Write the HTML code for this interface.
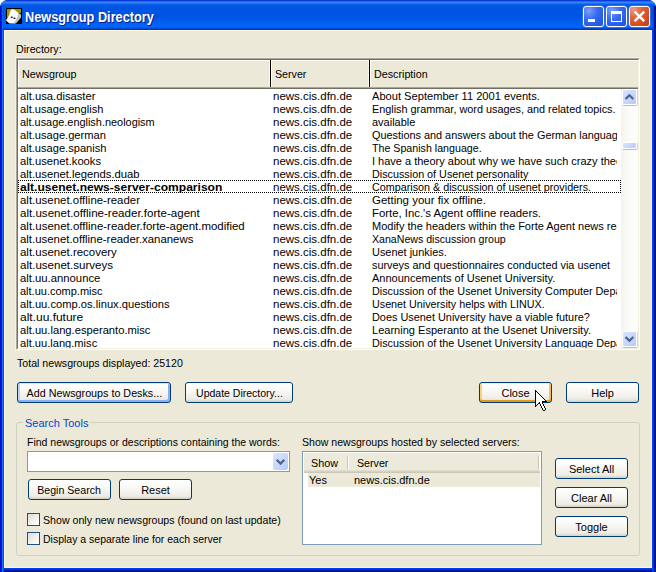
<!DOCTYPE html>
<html><head><meta charset="utf-8">
<style>
*{box-sizing:border-box;margin:0;padding:0}
html,body{width:656px;height:572px;overflow:hidden;background:#fff}
body{position:relative;font-family:"Liberation Sans",sans-serif;font-size:11px;color:#000}
.a{position:absolute}
.t{position:absolute;white-space:nowrap;line-height:13px;height:13px}
#win{left:0;top:0;width:656px;height:572px;border-radius:8px 8px 0 0;overflow:hidden;background:#0040f0}
#title{left:0;top:0;width:656px;height:30px;
background:linear-gradient(180deg,#0831d9 0px,#0a43dc 1px,#3a8cfc 2px,#2f7ef8 3px,#0f62ea 4px,#0558e6 5px,#0054e3 8px,#0054e3 16px,#0058e8 19px,#005ef0 22px,#0064f8 25px,#0066fc 27px,#0054e8 28px,#003bc0 29px,#0036b8 30px)}
#lb{left:0;top:6px;width:4px;height:566px;background:linear-gradient(90deg,#0010cc 0 1px,#0020d4 1px 2px,rgba(26,112,245,.5) 2px 3px,rgba(0,80,224,.3) 3px 4px)}
#rb{left:652px;top:6px;width:4px;height:566px;background:linear-gradient(90deg,rgba(0,64,245,.4) 0 1px,rgba(0,53,224,.6) 1px 2px,#001890 2px 3px,#00158a 3px 4px)}
#bb{left:0;top:568px;width:656px;height:4px;background:linear-gradient(180deg,#0040f0 0 1px,#0035e0 1px 2px,#001a98 2px 3px,#00138a 3px 4px)}
#client{left:4px;top:30px;width:648px;height:538px;background:#ece9d8;border:1px solid #fff6da}
.ttl{left:25px;top:9px;font-weight:bold;font-size:14px;line-height:17px;transform:scaleX(0.91);transform-origin:0 0;color:#fff;text-shadow:1px 1px 0 #0a1a80;white-space:nowrap}
.cb{top:6px;width:21px;height:21px;border:1px solid #fff;border-radius:3px;box-shadow:0 0 0 0.5px rgba(255,255,255,.3)}
.min,.max{background:radial-gradient(circle at 25% 20%,#7aa2f8 0,#3a6cf0 40%,#2a5ce8 70%,#1e50e0 100%)}
.cls{background:radial-gradient(circle at 20% 15%,#ee9a80 0,#e2643a 35%,#d9501f 65%,#c23a12 100%)}
.btn{position:absolute;height:21px;border:1px solid #003c74;border-radius:3px;
background:linear-gradient(180deg,#ffffff 0,#fdfdfb 20%,#f4f3ee 60%,#ecebe5 85%,#dcd8cc 95%,#d6d0c5 100%);
text-align:center;line-height:20px;white-space:nowrap}
.def{box-shadow:inset 0 1px 0 #cee7ff,inset -2px -2px 0 #8caef2,inset 2px 0 0 #bcd3f8}
.hov{box-shadow:inset 0 1px 0 #ffe9b5,inset 0 -2px 0 #e59a18,inset 2px 0 0 #fbd27a,inset -2px 0 0 #f6bf4e}
.row{position:absolute;left:18px;width:603px;height:13px}
.c1,.c2,.c3{position:absolute;top:1px;line-height:13px;white-space:nowrap;height:13px;transform-origin:0 0}
.chk{position:absolute;width:13px;height:13px;border:1px solid #1c5180;background:linear-gradient(135deg,#dcdcd7 0,#f0f0ec 50%,#fff 100%)}
.sbf{position:absolute;left:622px;width:15px;border:1px solid #fff;border-radius:2px;background:linear-gradient(135deg,#d8e4fe 0,#c8d8fd 50%,#b6cbfb 100%)}
.sbs{position:absolute;left:623px;width:14px;height:1px;background:#a7bff2}
.sbr{position:absolute;left:637px;width:1px;background:#c6d6f6}
.px{position:absolute}
</style></head>
<body>
<div id="win" class="a">
  <div id="title" class="a"></div>
  <div id="lb" class="a"></div>
  <div id="rb" class="a"></div>
  <div id="bb" class="a"></div>
  <div class="a" style="left:0;top:30px;width:4px;height:542px;background:linear-gradient(90deg,#0010cc 0 1px,#0018d0 1px 2px,#1a70f5 2px 3px,#0050e0 3px 4px)"></div>
  <div class="a" style="left:652px;top:30px;width:4px;height:542px;background:linear-gradient(90deg,#0040f5 0 1px,#0035e0 1px 2px,#001890 2px 3px,#00158a 3px 4px)"></div>
  <div id="client" class="a"></div>
</div>
<svg class="a" style="left:6px;top:8px" width="16" height="16" viewBox="0 0 16 16">
<rect width="16" height="16" fill="#000"/>
<polygon points="1,1 15,1 15,5 12,5 10,3 5,3 4,5 3,9 1,10" fill="#9a9a00"/>
<polygon points="6,1 9,2 12,4.5 13,6 11.5,11 9,15.5 3.5,15.5 0,12.5 3,7.5 4,3.5" fill="#fff"/>
<polygon points="12,4.5 15,6.5 15,9.5 13,12 10,15.5 7.5,15.5 10,12 11.8,8" fill="#c0c0c0"/>
<ellipse cx="5.8" cy="9.2" rx="1.1" ry="0.8" fill="#000"/>
<ellipse cx="8.5" cy="10.3" rx="1.1" ry="0.8" fill="#000"/>
</svg>
<div class="a ttl">Newsgroup Directory</div>
<div class="a cb min" style="left:583px"><div class="a" style="left:4px;top:12px;width:7px;height:3px;background:#fff"></div></div>
<div class="a cb max" style="left:606px"><div class="a" style="left:4px;top:4px;width:11px;height:11px;border:1px solid #fff;border-top-width:3px"></div></div>
<div class="a cb cls" style="left:629px"><svg class="a" style="left:0;top:0" width="19" height="19"><path d="M4.6,4.6 L14.2,14.2 M14.2,4.6 L4.6,14.2" stroke="#fff" stroke-width="2.4"/></svg></div>
<div class="t" style="left:16px;top:43px;transform:scaleX(0.97);transform-origin:0 0">Directory:</div>
<div class="px" style="left:15px;top:57px;width:626px;height:1px;background:#f3f1e6"></div>
<div class="px" style="left:15px;top:57px;width:1px;height:294px;background:#f3f1e6"></div>
<div class="a" style="left:16px;top:58px;width:624px;height:292px;background:#fff;border-top:1px solid #aca899;border-left:1px solid #aca899;border-bottom:1px solid #fff;border-right:1px solid #fff"></div>
<div class="a" style="left:17px;top:59px;width:622px;height:290px;border-top:1px solid #716f64;border-left:1px solid #716f64;border-bottom:1px solid #f1efe2;border-right:1px solid #f1efe2"></div>
<div class="px" style="left:18px;top:60px;width:620px;height:29px;background:#ece9d8"></div>
<div class="px" style="left:18px;top:60px;width:620px;height:1px;background:#fff"></div>
<div class="px" style="left:18px;top:87px;width:620px;height:1px;background:#aca899"></div>
<div class="px" style="left:18px;top:88px;width:620px;height:1px;background:#716f64"></div>
<div class="px" style="left:18px;top:60px;width:1px;height:27px;background:#fff"></div>
<div class="px" style="left:269px;top:61px;width:1px;height:26px;background:#fbf8e6"></div>
<div class="px" style="left:270px;top:60px;width:1px;height:27px;background:#000"></div>
<div class="px" style="left:271px;top:60px;width:1px;height:27px;background:#fff"></div>
<div class="px" style="left:368px;top:61px;width:1px;height:26px;background:#fbf8e6"></div>
<div class="px" style="left:369px;top:60px;width:1px;height:27px;background:#000"></div>
<div class="px" style="left:370px;top:60px;width:1px;height:27px;background:#fff"></div>
<div class="t" style="left:22px;top:68px;transform:scaleX(0.98);transform-origin:0 0">Newsgroup</div>
<div class="t" style="left:275px;top:68px;transform:scaleX(0.97);transform-origin:0 0">Server</div>
<div class="t" style="left:374px;top:68px;transform:scaleX(0.975);transform-origin:0 0">Description</div>
<div class="a" style="left:0;top:89px;width:656px;height:259px;overflow:hidden">
<div class="row" style="top:0px"><div class="c1" style="left:2px;transform:scaleX(1.02)">alt.usa.disaster</div><div class="c2" style="left:255px;transform:scaleX(1.045)">news.cis.dfn.de</div><div class="a" style="left:354px;top:0;width:245px;height:13px;overflow:hidden"><div class="c3" style="left:0;transform:scaleX(1.01)">About September 11 2001 events.</div></div></div>
<div class="row" style="top:13px"><div class="c1" style="left:2px;transform:scaleX(1.01)">alt.usage.english</div><div class="c2" style="left:255px;transform:scaleX(1.045)">news.cis.dfn.de</div><div class="a" style="left:354px;top:0;width:245px;height:13px;overflow:hidden"><div class="c3" style="left:0;transform:scaleX(0.986)">English grammar, word usages, and related topics.</div></div></div>
<div class="row" style="top:26px"><div class="c1" style="left:2px;transform:scaleX(0.992)">alt.usage.english.neologism</div><div class="c2" style="left:255px;transform:scaleX(1.045)">news.cis.dfn.de</div><div class="a" style="left:354px;top:0;width:245px;height:13px;overflow:hidden"><div class="c3" style="left:0;transform:scaleX(1.0)">available</div></div></div>
<div class="row" style="top:39px"><div class="c1" style="left:2px;transform:scaleX(1.01)">alt.usage.german</div><div class="c2" style="left:255px;transform:scaleX(1.045)">news.cis.dfn.de</div><div class="a" style="left:354px;top:0;width:245px;height:13px;overflow:hidden"><div class="c3" style="left:0;transform:scaleX(0.988)">Questions and answers about the German language.</div></div></div>
<div class="row" style="top:52px"><div class="c1" style="left:2px;transform:scaleX(1.01)">alt.usage.spanish</div><div class="c2" style="left:255px;transform:scaleX(1.045)">news.cis.dfn.de</div><div class="a" style="left:354px;top:0;width:245px;height:13px;overflow:hidden"><div class="c3" style="left:0;transform:scaleX(0.969)">The Spanish language.</div></div></div>
<div class="row" style="top:65px"><div class="c1" style="left:2px;transform:scaleX(1.02)">alt.usenet.kooks</div><div class="c2" style="left:255px;transform:scaleX(1.045)">news.cis.dfn.de</div><div class="a" style="left:354px;top:0;width:245px;height:13px;overflow:hidden"><div class="c3" style="left:0;transform:scaleX(1.0)">I have a theory about why we have such crazy theories.</div></div></div>
<div class="row" style="top:78px"><div class="c1" style="left:2px;transform:scaleX(1.024)">alt.usenet.legends.duab</div><div class="c2" style="left:255px;transform:scaleX(1.045)">news.cis.dfn.de</div><div class="a" style="left:354px;top:0;width:245px;height:13px;overflow:hidden"><div class="c3" style="left:0;transform:scaleX(0.98)">Discussion of Usenet personality</div></div></div>
<div class="row" style="top:91px"><div class="c1" style="left:2px;font-weight:bold;transform:scaleX(1.096)">alt.usenet.news-server-comparison</div><div class="c2" style="left:255px;transform:scaleX(1.045)">news.cis.dfn.de</div><div class="a" style="left:354px;top:0;width:245px;height:13px;overflow:hidden"><div class="c3" style="left:0;transform:scaleX(0.979)">Comparison &amp; discussion of usenet providers.</div></div></div>
<div class="row" style="top:104px"><div class="c1" style="left:2px;transform:scaleX(1.04)">alt.usenet.offline-reader</div><div class="c2" style="left:255px;transform:scaleX(1.045)">news.cis.dfn.de</div><div class="a" style="left:354px;top:0;width:245px;height:13px;overflow:hidden"><div class="c3" style="left:0;transform:scaleX(1.043)">Getting your fix offline.</div></div></div>
<div class="row" style="top:117px"><div class="c1" style="left:2px;transform:scaleX(1.051)">alt.usenet.offline-reader.forte-agent</div><div class="c2" style="left:255px;transform:scaleX(1.045)">news.cis.dfn.de</div><div class="a" style="left:354px;top:0;width:245px;height:13px;overflow:hidden"><div class="c3" style="left:0;transform:scaleX(1.031)">Forte, Inc.'s Agent offline readers.</div></div></div>
<div class="row" style="top:130px"><div class="c1" style="left:2px;transform:scaleX(1.042)">alt.usenet.offline-reader.forte-agent.modified</div><div class="c2" style="left:255px;transform:scaleX(1.045)">news.cis.dfn.de</div><div class="a" style="left:354px;top:0;width:245px;height:13px;overflow:hidden"><div class="c3" style="left:0;transform:scaleX(1.0)">Modify the headers within the Forte Agent news reader.</div></div></div>
<div class="row" style="top:143px"><div class="c1" style="left:2px;transform:scaleX(1.036)">alt.usenet.offline-reader.xananews</div><div class="c2" style="left:255px;transform:scaleX(1.045)">news.cis.dfn.de</div><div class="a" style="left:354px;top:0;width:245px;height:13px;overflow:hidden"><div class="c3" style="left:0;transform:scaleX(0.963)">XanaNews discussion group</div></div></div>
<div class="row" style="top:156px"><div class="c1" style="left:2px;transform:scaleX(1.042)">alt.usenet.recovery</div><div class="c2" style="left:255px;transform:scaleX(1.045)">news.cis.dfn.de</div><div class="a" style="left:354px;top:0;width:245px;height:13px;overflow:hidden"><div class="c3" style="left:0;transform:scaleX(0.994)">Usenet junkies.</div></div></div>
<div class="row" style="top:169px"><div class="c1" style="left:2px;transform:scaleX(1.049)">alt.usenet.surveys</div><div class="c2" style="left:255px;transform:scaleX(1.045)">news.cis.dfn.de</div><div class="a" style="left:354px;top:0;width:245px;height:13px;overflow:hidden"><div class="c3" style="left:0;transform:scaleX(0.988)">surveys and questionnaires conducted via usenet</div></div></div>
<div class="row" style="top:182px"><div class="c1" style="left:2px;transform:scaleX(1.026)">alt.uu.announce</div><div class="c2" style="left:255px;transform:scaleX(1.045)">news.cis.dfn.de</div><div class="a" style="left:354px;top:0;width:245px;height:13px;overflow:hidden"><div class="c3" style="left:0;transform:scaleX(1.0)">Announcements of Usenet University.</div></div></div>
<div class="row" style="top:195px"><div class="c1" style="left:2px;transform:scaleX(1.0)">alt.uu.comp.misc</div><div class="c2" style="left:255px;transform:scaleX(1.045)">news.cis.dfn.de</div><div class="a" style="left:354px;top:0;width:245px;height:13px;overflow:hidden"><div class="c3" style="left:0;transform:scaleX(0.983)">Discussion of the Usenet University Computer Department.</div></div></div>
<div class="row" style="top:208px"><div class="c1" style="left:2px;transform:scaleX(1.015)">alt.uu.comp.os.linux.questions</div><div class="c2" style="left:255px;transform:scaleX(1.045)">news.cis.dfn.de</div><div class="a" style="left:354px;top:0;width:245px;height:13px;overflow:hidden"><div class="c3" style="left:0;transform:scaleX(0.977)">Usenet University helps with LINUX.</div></div></div>
<div class="row" style="top:221px"><div class="c1" style="left:2px;transform:scaleX(1.089)">alt.uu.future</div><div class="c2" style="left:255px;transform:scaleX(1.045)">news.cis.dfn.de</div><div class="a" style="left:354px;top:0;width:245px;height:13px;overflow:hidden"><div class="c3" style="left:0;transform:scaleX(0.99)">Does Usenet University have a viable future?</div></div></div>
<div class="row" style="top:234px"><div class="c1" style="left:2px;transform:scaleX(1.016)">alt.uu.lang.esperanto.misc</div><div class="c2" style="left:255px;transform:scaleX(1.045)">news.cis.dfn.de</div><div class="a" style="left:354px;top:0;width:245px;height:13px;overflow:hidden"><div class="c3" style="left:0;transform:scaleX(1.004)">Learning Esperanto at the Usenet University.</div></div></div>
<div class="row" style="top:247px"><div class="c1" style="left:2px;transform:scaleX(1.01)">alt.uu.lang.misc</div><div class="c2" style="left:255px;transform:scaleX(1.045)">news.cis.dfn.de</div><div class="a" style="left:354px;top:0;width:245px;height:13px;overflow:hidden"><div class="c3" style="left:0;transform:scaleX(0.983)">Discussion of the Usenet University Language Department.</div></div></div>
</div>
<div class="px" style="left:18px;top:180px;width:603px;height:1px;background:repeating-linear-gradient(90deg,#000 0 1px,transparent 1px 2px)"></div>
<div class="px" style="left:18px;top:192px;width:603px;height:1px;background:repeating-linear-gradient(90deg,#000 0 1px,transparent 1px 2px)"></div>
<div class="px" style="left:18px;top:180px;width:1px;height:13px;background:repeating-linear-gradient(180deg,#000 0 1px,transparent 1px 2px)"></div>
<div class="px" style="left:620px;top:180px;width:1px;height:13px;background:repeating-linear-gradient(180deg,#000 0 1px,transparent 1px 2px)"></div>
<div class="px" style="left:621px;top:89px;width:17px;height:259px;background:linear-gradient(90deg,#f3f2ec 0,#f7f6f2 15%,#fbfbf8 50%,#fdfdfb 80%,#fefefe 100%)"></div>
<div class="sbf" style="top:89px;height:16px"><svg width="13" height="14" style="position:absolute;left:0;top:0"><polyline points="2.5,9 6.4,5.2 10.3,9" fill="none" stroke="#4d6185" stroke-width="2.2"/></svg></div>
<div class="sbs" style="top:105px"></div><div class="sbr" style="top:90px;height:15px"></div>
<div class="sbf" style="top:331px;height:16px"><svg width="13" height="14" style="position:absolute;left:0;top:0"><polyline points="2.5,5 6.4,8.8 10.3,5" fill="none" stroke="#4d6185" stroke-width="2.2"/></svg></div>
<div class="sbs" style="top:347px"></div><div class="sbr" style="top:332px;height:15px"></div>
<div class="sbf" style="top:142px;height:7px"></div>
<div class="sbs" style="top:149px"></div><div class="sbr" style="top:143px;height:6px"></div>
<div class="t" style="left:17px;top:357px;transform:scaleX(0.965);transform-origin:0 0">Total newsgroups displayed: 25120</div>
<div class="btn def" style="left:17px;top:382px;width:154px;height:21px"><span style="display:inline-block;transform:scaleX(0.977)">Add Newsgroups to Desks...</span></div>
<div class="btn " style="left:185px;top:382px;width:108px;height:21px"><span style="display:inline-block;transform:scaleX(0.955)">Update Directory...</span></div>
<div class="btn hov" style="left:479px;top:382px;width:73px;height:21px">Close</div>
<div class="btn " style="left:566px;top:382px;width:73px;height:21px">Help</div>
<div class="a" style="left:16px;top:422px;width:624px;height:134px;border:1px solid #d0d0bf;border-radius:3px"></div>
<div class="px" style="left:23px;top:420px;width:3px;height:4px;background:#ece9d8"></div>
<div class="t" style="left:25px;top:417px;color:#0046d5;background:#ece9d8;padding-right:2px">Search Tools</div>
<div class="t" style="left:27px;top:436px;transform:scaleX(0.953);transform-origin:0 0">Find newsgroups or descriptions containing the words:</div>
<div class="a" style="left:27px;top:451px;width:263px;height:21px;border:1px solid #7f9db9;background:#fff"></div>
<div class="a" style="left:273px;top:453px;width:15px;height:17px;border-radius:2px;background:linear-gradient(135deg,#dbe6fe 0,#c9d9fd 50%,#b4cafb 100%)"><svg class="a" style="left:0;top:0" width="15" height="17"><polyline points="3.7,6.8 7.5,10.6 11.3,6.8" fill="none" stroke="#4d6185" stroke-width="2.2"/></svg></div>
<div class="btn " style="left:28px;top:479px;width:83px;height:21px"><span style="display:inline-block;transform:scaleX(0.965)">Begin Search</span></div>
<div class="btn " style="left:119px;top:479px;width:73px;height:21px">Reset</div>
<div class="chk" style="left:27px;top:513px"></div>
<div class="t" style="left:43px;top:514px;transform:scaleX(0.965);transform-origin:0 0">Show only new newsgroups (found on last update)</div>
<div class="chk" style="left:27px;top:532px"></div>
<div class="t" style="left:43px;top:533px;transform:scaleX(0.954);transform-origin:0 0">Display a separate line for each server</div>
<div class="t" style="left:302px;top:436px;transform:scaleX(0.96);transform-origin:0 0">Show newsgroups hosted by selected servers:</div>
<div class="a" style="left:302px;top:451px;width:240px;height:94px;border:1px solid #7f9db9;background:#fff"></div>
<div class="px" style="left:304px;top:453px;width:236px;height:20px;background:#ebeadb"></div>
<div class="px" style="left:304px;top:470px;width:236px;height:1px;background:#e2decd"></div>
<div class="px" style="left:304px;top:471px;width:236px;height:1px;background:#d6d2c2"></div>
<div class="px" style="left:304px;top:472px;width:236px;height:1px;background:#cbc7b8"></div>
<div class="px" style="left:347px;top:456px;width:1px;height:13px;background:#c7c5b2"></div>
<div class="px" style="left:348px;top:456px;width:1px;height:13px;background:#fff"></div>
<div class="px" style="left:538px;top:456px;width:1px;height:13px;background:#c7c5b2"></div>
<div class="px" style="left:539px;top:456px;width:1px;height:13px;background:#fff"></div>
<div class="t" style="left:311px;top:457px;transform:scaleX(0.98);transform-origin:0 0">Show</div>
<div class="t" style="left:357px;top:457px;transform:scaleX(0.97);transform-origin:0 0">Server</div>
<div class="px" style="left:308px;top:473px;width:232px;height:14px;background:#ece9d8"></div>
<div class="t" style="left:309px;top:474px">Yes</div>
<div class="t" style="left:354px;top:474px">news.cis.dfn.de</div>
<div class="btn " style="left:555px;top:458px;width:73px;height:21px">Select All</div>
<div class="btn " style="left:555px;top:487px;width:73px;height:21px">Clear All</div>
<div class="btn " style="left:555px;top:516px;width:73px;height:21px">Toggle</div>
<svg class="a" style="left:535px;top:390px" width="12" height="21" shape-rendering="crispEdges"><rect x="0" y="0" width="1" height="1" fill="#000"/><rect x="0" y="1" width="1" height="1" fill="#000"/><rect x="1" y="1" width="1" height="1" fill="#000"/><rect x="0" y="2" width="1" height="1" fill="#000"/><rect x="1" y="2" width="1" height="1" fill="#fff"/><rect x="2" y="2" width="1" height="1" fill="#000"/><rect x="0" y="3" width="1" height="1" fill="#000"/><rect x="1" y="3" width="1" height="1" fill="#fff"/><rect x="2" y="3" width="1" height="1" fill="#fff"/><rect x="3" y="3" width="1" height="1" fill="#000"/><rect x="0" y="4" width="1" height="1" fill="#000"/><rect x="1" y="4" width="1" height="1" fill="#fff"/><rect x="2" y="4" width="1" height="1" fill="#fff"/><rect x="3" y="4" width="1" height="1" fill="#fff"/><rect x="4" y="4" width="1" height="1" fill="#000"/><rect x="0" y="5" width="1" height="1" fill="#000"/><rect x="1" y="5" width="1" height="1" fill="#fff"/><rect x="2" y="5" width="1" height="1" fill="#fff"/><rect x="3" y="5" width="1" height="1" fill="#fff"/><rect x="4" y="5" width="1" height="1" fill="#fff"/><rect x="5" y="5" width="1" height="1" fill="#000"/><rect x="0" y="6" width="1" height="1" fill="#000"/><rect x="1" y="6" width="1" height="1" fill="#fff"/><rect x="2" y="6" width="1" height="1" fill="#fff"/><rect x="3" y="6" width="1" height="1" fill="#fff"/><rect x="4" y="6" width="1" height="1" fill="#fff"/><rect x="5" y="6" width="1" height="1" fill="#fff"/><rect x="6" y="6" width="1" height="1" fill="#000"/><rect x="0" y="7" width="1" height="1" fill="#000"/><rect x="1" y="7" width="1" height="1" fill="#fff"/><rect x="2" y="7" width="1" height="1" fill="#fff"/><rect x="3" y="7" width="1" height="1" fill="#fff"/><rect x="4" y="7" width="1" height="1" fill="#fff"/><rect x="5" y="7" width="1" height="1" fill="#fff"/><rect x="6" y="7" width="1" height="1" fill="#fff"/><rect x="7" y="7" width="1" height="1" fill="#000"/><rect x="0" y="8" width="1" height="1" fill="#000"/><rect x="1" y="8" width="1" height="1" fill="#fff"/><rect x="2" y="8" width="1" height="1" fill="#fff"/><rect x="3" y="8" width="1" height="1" fill="#fff"/><rect x="4" y="8" width="1" height="1" fill="#fff"/><rect x="5" y="8" width="1" height="1" fill="#fff"/><rect x="6" y="8" width="1" height="1" fill="#fff"/><rect x="7" y="8" width="1" height="1" fill="#fff"/><rect x="8" y="8" width="1" height="1" fill="#000"/><rect x="0" y="9" width="1" height="1" fill="#000"/><rect x="1" y="9" width="1" height="1" fill="#fff"/><rect x="2" y="9" width="1" height="1" fill="#fff"/><rect x="3" y="9" width="1" height="1" fill="#fff"/><rect x="4" y="9" width="1" height="1" fill="#fff"/><rect x="5" y="9" width="1" height="1" fill="#fff"/><rect x="6" y="9" width="1" height="1" fill="#fff"/><rect x="7" y="9" width="1" height="1" fill="#fff"/><rect x="8" y="9" width="1" height="1" fill="#fff"/><rect x="9" y="9" width="1" height="1" fill="#000"/><rect x="0" y="10" width="1" height="1" fill="#000"/><rect x="1" y="10" width="1" height="1" fill="#fff"/><rect x="2" y="10" width="1" height="1" fill="#fff"/><rect x="3" y="10" width="1" height="1" fill="#fff"/><rect x="4" y="10" width="1" height="1" fill="#fff"/><rect x="5" y="10" width="1" height="1" fill="#fff"/><rect x="6" y="10" width="1" height="1" fill="#fff"/><rect x="7" y="10" width="1" height="1" fill="#fff"/><rect x="8" y="10" width="1" height="1" fill="#fff"/><rect x="9" y="10" width="1" height="1" fill="#fff"/><rect x="10" y="10" width="1" height="1" fill="#000"/><rect x="0" y="11" width="1" height="1" fill="#000"/><rect x="1" y="11" width="1" height="1" fill="#fff"/><rect x="2" y="11" width="1" height="1" fill="#fff"/><rect x="3" y="11" width="1" height="1" fill="#fff"/><rect x="4" y="11" width="1" height="1" fill="#fff"/><rect x="5" y="11" width="1" height="1" fill="#fff"/><rect x="6" y="11" width="1" height="1" fill="#fff"/><rect x="7" y="11" width="1" height="1" fill="#000"/><rect x="8" y="11" width="1" height="1" fill="#000"/><rect x="9" y="11" width="1" height="1" fill="#000"/><rect x="10" y="11" width="1" height="1" fill="#000"/><rect x="11" y="11" width="1" height="1" fill="#000"/><rect x="0" y="12" width="1" height="1" fill="#000"/><rect x="1" y="12" width="1" height="1" fill="#fff"/><rect x="2" y="12" width="1" height="1" fill="#fff"/><rect x="3" y="12" width="1" height="1" fill="#fff"/><rect x="4" y="12" width="1" height="1" fill="#000"/><rect x="5" y="12" width="1" height="1" fill="#fff"/><rect x="6" y="12" width="1" height="1" fill="#fff"/><rect x="7" y="12" width="1" height="1" fill="#000"/><rect x="0" y="13" width="1" height="1" fill="#000"/><rect x="1" y="13" width="1" height="1" fill="#fff"/><rect x="2" y="13" width="1" height="1" fill="#fff"/><rect x="3" y="13" width="1" height="1" fill="#000"/><rect x="4" y="13" width="1" height="1" fill="#000"/><rect x="5" y="13" width="1" height="1" fill="#fff"/><rect x="6" y="13" width="1" height="1" fill="#fff"/><rect x="7" y="13" width="1" height="1" fill="#000"/><rect x="0" y="14" width="1" height="1" fill="#000"/><rect x="1" y="14" width="1" height="1" fill="#fff"/><rect x="2" y="14" width="1" height="1" fill="#000"/><rect x="5" y="14" width="1" height="1" fill="#000"/><rect x="6" y="14" width="1" height="1" fill="#fff"/><rect x="7" y="14" width="1" height="1" fill="#fff"/><rect x="8" y="14" width="1" height="1" fill="#000"/><rect x="0" y="15" width="1" height="1" fill="#000"/><rect x="1" y="15" width="1" height="1" fill="#000"/><rect x="5" y="15" width="1" height="1" fill="#000"/><rect x="6" y="15" width="1" height="1" fill="#fff"/><rect x="7" y="15" width="1" height="1" fill="#fff"/><rect x="8" y="15" width="1" height="1" fill="#000"/><rect x="0" y="16" width="1" height="1" fill="#000"/><rect x="6" y="16" width="1" height="1" fill="#000"/><rect x="7" y="16" width="1" height="1" fill="#fff"/><rect x="8" y="16" width="1" height="1" fill="#fff"/><rect x="9" y="16" width="1" height="1" fill="#000"/><rect x="6" y="17" width="1" height="1" fill="#000"/><rect x="7" y="17" width="1" height="1" fill="#fff"/><rect x="8" y="17" width="1" height="1" fill="#fff"/><rect x="9" y="17" width="1" height="1" fill="#000"/><rect x="7" y="18" width="1" height="1" fill="#000"/><rect x="8" y="18" width="1" height="1" fill="#fff"/><rect x="9" y="18" width="1" height="1" fill="#fff"/><rect x="10" y="18" width="1" height="1" fill="#000"/><rect x="7" y="19" width="1" height="1" fill="#000"/><rect x="8" y="19" width="1" height="1" fill="#fff"/><rect x="9" y="19" width="1" height="1" fill="#fff"/><rect x="10" y="19" width="1" height="1" fill="#000"/><rect x="8" y="20" width="1" height="1" fill="#000"/><rect x="9" y="20" width="1" height="1" fill="#000"/></svg>
</body></html>
